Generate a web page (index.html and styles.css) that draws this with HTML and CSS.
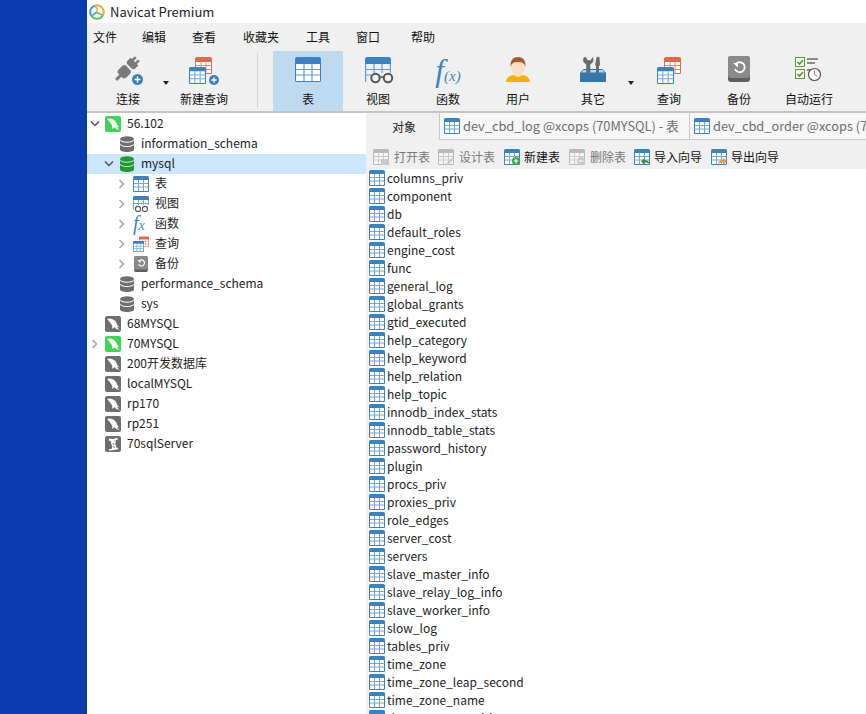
FILE: index.html
```html
<!DOCTYPE html>
<html lang="zh">
<head>
<meta charset="utf-8">
<title>Navicat Premium</title>
<link rel="stylesheet" href="styles.css">
</head>
<body>
<svg class="sprite" width="0" height="0">
  <defs>
    <symbol id="tbl" viewBox="0 0 16 16">
      <path d="M1.500 0h13A1.500 1.500 0 0 1 16 1.500V15a1 1 0 0 1-1 1H1a1 1 0 0 1-1-1V1.500A1.500 1.500 0 0 1 1.500 0z" fill="#3b83c0"/>
      <rect x="1" y="4" width="14" height="11" fill="#fff"/>
      <path d="M5.500 4v11M10.500 4v11M1 7.500h14M1 11h14" stroke="#6fa8d8" stroke-width="1" fill="none"/>
    </symbol>
    <symbol id="tblbig" viewBox="0 0 26 25">
      <path d="M2 0h22a2 2 0 0 1 2 2v21.500a1.500 1.500 0 0 1-1.500 1.500h-23A1.500 1.500 0 0 1 0 23.500V2a2 2 0 0 1 2-2z" fill="#3b83c0"/>
      <rect x="1" y="7" width="24" height="17" fill="#fff"/>
      <path d="M9 7v17M17 7v17M1 12.500h24M1 18h24" stroke="#5d9dd4" stroke-width="1.200" fill="none"/>
    </symbol>
    <symbol id="tblred" viewBox="0 0 17 17">
      <path d="M2 0h13a2 2 0 0 1 2 2v14a1 1 0 0 1-1 1H1a1 1 0 0 1-1-1V2a2 2 0 0 1 2-2z" fill="#dc6a4b"/>
      <rect x="1" y="5" width="15" height="11" fill="#fff"/>
      <path d="M6 5v11M11 5v11M1 8.500h15M1 12.500h15" stroke="#e08a72" stroke-width="1" fill="none"/>
    </symbol>
    <symbol id="dolphin" viewBox="0 0 16 16">
      <path d="M2 3C5 1.500 9 3 11 6c1 2 1.500 4 3 5l-2 .5 2.500 2.500c-2.500-.5-4-1.500-5-3-.5 1-1.500 1.500-2.500 1.500.5-1 .5-2 0-3C6 7.500 4 5 2 3z" fill="#fff"/>
    </symbol>
    <symbol id="db" viewBox="0 0 16 16">
      <ellipse cx="8" cy="3" rx="7" ry="2.800" fill="currentColor"/>
      <path d="M1 4.500c1.200 1.500 3.800 2.200 7 2.200s5.800-.7 7-2.200V7.200C15 8.800 12 10 8 10S1 8.800 1 7.200z" fill="currentColor"/>
      <path d="M1 8.800c1.200 1.500 3.800 2.200 7 2.200s5.800-.7 7-2.200v4.400C15 14.900 12 16 8 16s-7-1.100-7-2.800z" fill="currentColor"/>
    </symbol>
    <symbol id="chev-r" viewBox="0 0 8 10">
      <path d="M1.500 1l4 4-4 4" fill="none" stroke="#a6a6a6" stroke-width="1.500"/>
    </symbol>
    <symbol id="chev-d" viewBox="0 0 10 8">
      <path d="M1 1.500l4 4 4-4" fill="none" stroke="#555" stroke-width="1.500"/>
    </symbol>
    <symbol id="backup" viewBox="0 0 22 26">
      <rect width="22" height="26" rx="3" fill="#5f5f5f"/>
      <rect width="22" height="22" rx="3" fill="#8a8a8a"/>
      <path d="M7.500 8.500A5 5 0 1 1 7 13" fill="none" stroke="#fff" stroke-width="1.800"/>
      <path d="M5 7h5v4.500z" fill="#fff"/>
    </symbol>
    <symbol id="plus" viewBox="0 0 10 10">
      <circle cx="5" cy="5" r="5" fill="#3b7fb8"/>
      <path d="M5 2.300v5.400M2.300 5h5.400" stroke="#fff" stroke-width="1.300"/>
    </symbol>
  </defs>
</svg>

<div class="desktop"></div>
<main class="app">
  <header class="titlebar">
    <svg class="logo" viewBox="0 0 16 16" aria-hidden="true">
      <path d="M2.500 12A6.700 6.700 0 0 1 6.500 1.500" fill="none" stroke="#3f9fe0" stroke-width="2"/>
      <path d="M6.500 1.500A6.700 6.700 0 0 1 14 11" fill="none" stroke="#f4a93a" stroke-width="2"/>
      <path d="M14 11A6.700 6.700 0 0 1 2.500 12" fill="none" stroke="#5fc65c" stroke-width="2"/>
      <path d="M5.500 2.500C9 3.500 9 6.500 7 8.500" fill="none" stroke="#f4a93a" stroke-width="1.600"/>
      <path d="M7 8.500C5 10 4 11 3 12" fill="none" stroke="#3f9fe0" stroke-width="1.600"/>
      <path d="M7 8.500c2 .5 4.500 1.500 6.500 2.500" fill="none" stroke="#5fc65c" stroke-width="1.600"/>
    </svg>
    <span>Navicat Premium</span>
  </header>

  <nav class="menu">
    <span>文件</span><span>编辑</span><span>查看</span><span>收藏夹</span><span>工具</span><span>窗口</span><span>帮助</span>
  </nav>

  <section class="toolbar">
    <div class="tool">
      <svg class="ticon" viewBox="0 0 34 30" aria-hidden="true">
        <g transform="rotate(45 15 15)" fill="#7a7a7a">
          <rect x="11.500" y="-1" width="2.500" height="5"/>
          <rect x="16" y="-1" width="2.500" height="5"/>
          <path d="M9.500 3h11v4a3 3 0 0 1-3 3h-5a3 3 0 0 1-3-3z"/>
          <path d="M12.500 12h5a3 3 0 0 1 3 3v5a3 3 0 0 1-3 3h-5a3 3 0 0 1-3-3v-5a3 3 0 0 1 3-3z"/>
          <rect x="13.500" y="22" width="3" height="7"/>
        </g>
        <use href="#plus" x="21" y="19" width="11" height="11"/>
      </svg>
      <span>连接</span>
    </div>
    <i class="caret"></i>
    <div class="tool">
      <svg class="ticon" viewBox="0 0 34 30" aria-hidden="true">
        <use href="#tblred" x="8" y="2" width="17" height="17"/>
        <use href="#tbl" x="2" y="12" width="17" height="17"/>
        <use href="#plus" x="22" y="20" width="10" height="10"/>
      </svg>
      <span>新建查询</span>
    </div>
    <i class="sep"></i>
    <div class="tool active">
      <svg class="ticon" viewBox="0 0 34 30" aria-hidden="true"><use href="#tblbig" x="4" y="2" width="26" height="25"/></svg>
      <span>表</span>
    </div>
    <div class="tool">
      <svg class="ticon" viewBox="0 0 34 30" aria-hidden="true">
        <path d="M6 2h22a2 2 0 0 1 2 2v5H4V4a2 2 0 0 1 2-2z" fill="#3b83c0"/>
        <path d="M4.600 9v18M13 9v9M21 9v9M29.400 9v9M4 14.500h26M4 20h6" stroke="#5d9dd4" stroke-width="1.200" fill="none"/>
        <circle cx="14.500" cy="23" r="4.200" fill="#f0f0f0" stroke="#555" stroke-width="2"/>
        <circle cx="27" cy="23" r="4.200" fill="#f0f0f0" stroke="#555" stroke-width="2"/>
        <path d="M18.500 22h4.500" stroke="#555" stroke-width="1.600"/>
      </svg>
      <span>视图</span>
    </div>
    <div class="tool">
      <div class="fx"><b>f</b><em>(x)</em></div>
      <span>函数</span>
    </div>
    <div class="tool">
      <svg class="ticon" viewBox="0 0 34 30" aria-hidden="true">
        <path d="M5 27c0-4 3-6 7-7l5 2 5-2c4 1 7 3 7 7z" fill="#f4b400"/>
        <ellipse cx="17" cy="12" rx="7" ry="9" fill="#f8dfc8"/>
        <path d="M9.500 12C9 5 12.500 2 17 2s8 3 7.500 10C23.500 8 21 7 17 7s-6.500 1-7.500 5z" fill="#a8592a"/>
      </svg>
      <span>用户</span>
    </div>
    <div class="tool tool-gap">
      <svg class="ticon" viewBox="0 0 34 30" aria-hidden="true">
        <path d="M4.500 18l3-3.500h19l3 3.500z" fill="#bcd6ec" stroke="#3477ad"/>
        <path d="M8 2.500C6.500 5 7.500 8 10.500 9v11h3.500V9c3-1 4-4 2.500-6.500L15 5.500h-3.500L10 2.500z" fill="#6b6b6b" stroke="#6b6b6b" stroke-width=".6"/>
        <path d="M20.500 2.500c0-1 3-1 3 0l.5 8h-1v9h-3v-9h-1z" fill="#6b6b6b"/>
        <path d="M4 18h26v9H4z" fill="#3477ad"/>
      </svg>
      <span>其它</span>
    </div>
    <i class="caret"></i>
    <div class="tool">
      <svg class="ticon" viewBox="0 0 34 30" aria-hidden="true">
        <use href="#tblred" x="12" y="2" width="17" height="17"/>
        <use href="#tbl" x="5" y="12" width="17" height="17"/>
      </svg>
      <span>查询</span>
    </div>
    <div class="tool">
      <svg class="ticon" viewBox="0 0 34 30" aria-hidden="true"><use href="#backup" x="6" y="1" width="22" height="26"/></svg>
      <span>备份</span>
    </div>
    <div class="tool">
      <svg class="ticon" viewBox="0 0 34 30" aria-hidden="true">
        <rect x="3.500" y="2.500" width="9" height="9" fill="#fff" stroke="#5e9e3a"/>
        <path d="M5.500 7l2 2 3.500-4" stroke="#4f8f2f" stroke-width="1.600" fill="none"/>
        <rect x="3.500" y="14.500" width="9" height="9" fill="#fff" stroke="#5e9e3a"/>
        <path d="M5.500 19l2 2 3.500-4" stroke="#4f8f2f" stroke-width="1.600" fill="none"/>
        <path d="M15 4h11M15 8h8M15 15h4" stroke="#8a8a8a" stroke-width="1.800"/>
        <circle cx="22.500" cy="19.500" r="6" fill="#fff" stroke="#555" stroke-width="1.200"/>
        <path d="M22.500 15.500v4l3 2" stroke="#d9534f" fill="none"/>
      </svg>
      <span>自动运行</span>
    </div>
  </section>

  <div class="body">
    <aside class="tree">
      <div class="row l0"><svg class="chev"><use href="#chev-d"/></svg><span class="conn green"><svg><use href="#dolphin"/></svg></span><span class="lbl">56.102</span></div>
      <div class="row l1"><svg class="chev"></svg><svg class="dbi"><use href="#db"/></svg><span class="lbl">information_schema</span></div>
      <div class="row l1 sel"><svg class="chev"><use href="#chev-d"/></svg><svg class="dbi on"><use href="#db"/></svg><span class="lbl">mysql</span></div>
      <div class="row l2"><svg class="chev"><use href="#chev-r"/></svg><svg class="ic"><use href="#tbl"/></svg><span class="lbl">表</span></div>
      <div class="row l2"><svg class="chev"><use href="#chev-r"/></svg><svg class="ic" viewBox="0 0 16 16"><path d="M1.500 0h13A1.500 1.500 0 0 1 16 1.500V4H0V1.500A1.500 1.500 0 0 1 1.500 0z" fill="#3b83c0"/><path d="M.5 4v10M5.500 4v5M10.500 4v5M15.500 4v5M0 7.500h16" stroke="#6fa8d8" fill="none"/><circle cx="5" cy="13" r="2.600" fill="#fff" stroke="#555" stroke-width="1.100"/><circle cx="12" cy="13" r="2.600" fill="#fff" stroke="#555" stroke-width="1.100"/></svg><span class="lbl">视图</span></div>
      <div class="row l2"><svg class="chev"><use href="#chev-r"/></svg><span class="fxs"><b>f</b>x</span><span class="lbl">函数</span></div>
      <div class="row l2"><svg class="chev"><use href="#chev-r"/></svg><svg class="ic" viewBox="0 0 16 16"><use href="#tblred" x="6" y="0" width="10" height="11"/><use href="#tbl" x="0" y="5" width="11" height="11"/></svg><span class="lbl">查询</span></div>
      <div class="row l2"><svg class="chev"><use href="#chev-r"/></svg><svg class="ic"><use href="#backup"/></svg><span class="lbl">备份</span></div>
      <div class="row l1"><svg class="chev"></svg><svg class="dbi"><use href="#db"/></svg><span class="lbl">performance_schema</span></div>
      <div class="row l1"><svg class="chev"></svg><svg class="dbi"><use href="#db"/></svg><span class="lbl">sys</span></div>
      <div class="row l0"><svg class="chev"></svg><span class="conn"><svg><use href="#dolphin"/></svg></span><span class="lbl">68MYSQL</span></div>
      <div class="row l0"><svg class="chev"><use href="#chev-r"/></svg><span class="conn green"><svg><use href="#dolphin"/></svg></span><span class="lbl">70MYSQL</span></div>
      <div class="row l0"><svg class="chev"></svg><span class="conn"><svg><use href="#dolphin"/></svg></span><span class="lbl">200开发数据库</span></div>
      <div class="row l0"><svg class="chev"></svg><span class="conn"><svg><use href="#dolphin"/></svg></span><span class="lbl">localMYSQL</span></div>
      <div class="row l0"><svg class="chev"></svg><span class="conn"><svg><use href="#dolphin"/></svg></span><span class="lbl">rp170</span></div>
      <div class="row l0"><svg class="chev"></svg><span class="conn"><svg><use href="#dolphin"/></svg></span><span class="lbl">rp251</span></div>
      <div class="row l0"><svg class="chev"></svg><span class="conn"><svg viewBox="0 0 16 16"><path d="M4 3.500c3 1 6 .5 8.500-1" stroke="#fff" stroke-width="2" fill="none"/><path d="M6 5c-.5 3 2 5 1 8.500l5-1c-1.500-3-2-5-1-8z" fill="#fff"/><path d="M7.500 7.500l2 1M8 10.500l2 1" stroke="#6e6e6e"/><path d="M4 14l9-1.500" stroke="#fff" stroke-width="1.500"/></svg></span><span class="lbl">70sqlServer</span></div>
    </aside>

    <section class="pane">
      <div class="tabs">
        <div class="tab-obj">对象</div>
        <div class="tab"><svg class="ic"><use href="#tbl"/></svg><span>dev_cbd_log @xcops (70MYSQL) - 表</span></div>
        <div class="tab"><svg class="ic"><use href="#tbl"/></svg><span>dev_cbd_order @xcops (70MYSQL) - 表</span></div>
      </div>
      <div class="actions">
        <div class="act off"><svg class="ic" viewBox="0 0 16 16"><use href="#tbl"/><rect x="8" y="10" width="8" height="6" fill="#9a9a9a"/></svg><span>打开表</span></div>
        <div class="act off"><svg class="ic" viewBox="0 0 16 16"><use href="#tbl"/><path d="M8 15l7-7 1 2-6 6z" fill="#9a9a9a"/></svg><span>设计表</span></div>
        <div class="act nudge"><svg class="ic" viewBox="0 0 16 16"><use href="#tbl"/><circle cx="12" cy="12" r="4" fill="#3fa83f"/><path d="M12 9.700v4.600M9.700 12h4.600" stroke="#fff" stroke-width="1.200"/></svg><span>新建表</span></div>
        <div class="act off"><svg class="ic" viewBox="0 0 16 16"><use href="#tbl"/><circle cx="12" cy="12" r="4" fill="#d98c80"/><path d="M9.700 12h4.600" stroke="#fff" stroke-width="1.200"/></svg><span>删除表</span></div>
        <div class="act"><svg class="ic" viewBox="0 0 16 16"><use href="#tbl"/><path d="M15.500 15c-.5-3-2.500-4-5-4V9l-3.500 3.500L10.500 16v-2.500c2 0 3.500.3 5 1.500z" fill="#3f8f3f"/></svg><span>导入向导</span></div>
        <div class="act"><svg class="ic" viewBox="0 0 16 16"><use href="#tbl"/><path d="M7 15c.5-3 2.500-4 5-4V9l3.500 3.500L12 16v-2.500c-2 0-3.500.3-5 1.500z" fill="#e59a2e"/></svg><span>导出向导</span></div>
      </div>
      <ul class="list">
        <li><svg class="ic"><use href="#tbl"/></svg>columns_priv</li>
        <li><svg class="ic"><use href="#tbl"/></svg>component</li>
        <li><svg class="ic"><use href="#tbl"/></svg>db</li>
        <li><svg class="ic"><use href="#tbl"/></svg>default_roles</li>
        <li><svg class="ic"><use href="#tbl"/></svg>engine_cost</li>
        <li><svg class="ic"><use href="#tbl"/></svg>func</li>
        <li><svg class="ic"><use href="#tbl"/></svg>general_log</li>
        <li><svg class="ic"><use href="#tbl"/></svg>global_grants</li>
        <li><svg class="ic"><use href="#tbl"/></svg>gtid_executed</li>
        <li><svg class="ic"><use href="#tbl"/></svg>help_category</li>
        <li><svg class="ic"><use href="#tbl"/></svg>help_keyword</li>
        <li><svg class="ic"><use href="#tbl"/></svg>help_relation</li>
        <li><svg class="ic"><use href="#tbl"/></svg>help_topic</li>
        <li><svg class="ic"><use href="#tbl"/></svg>innodb_index_stats</li>
        <li><svg class="ic"><use href="#tbl"/></svg>innodb_table_stats</li>
        <li><svg class="ic"><use href="#tbl"/></svg>password_history</li>
        <li><svg class="ic"><use href="#tbl"/></svg>plugin</li>
        <li><svg class="ic"><use href="#tbl"/></svg>procs_priv</li>
        <li><svg class="ic"><use href="#tbl"/></svg>proxies_priv</li>
        <li><svg class="ic"><use href="#tbl"/></svg>role_edges</li>
        <li><svg class="ic"><use href="#tbl"/></svg>server_cost</li>
        <li><svg class="ic"><use href="#tbl"/></svg>servers</li>
        <li><svg class="ic"><use href="#tbl"/></svg>slave_master_info</li>
        <li><svg class="ic"><use href="#tbl"/></svg>slave_relay_log_info</li>
        <li><svg class="ic"><use href="#tbl"/></svg>slave_worker_info</li>
        <li><svg class="ic"><use href="#tbl"/></svg>slow_log</li>
        <li><svg class="ic"><use href="#tbl"/></svg>tables_priv</li>
        <li><svg class="ic"><use href="#tbl"/></svg>time_zone</li>
        <li><svg class="ic"><use href="#tbl"/></svg>time_zone_leap_second</li>
        <li><svg class="ic"><use href="#tbl"/></svg>time_zone_name</li>
        <li><svg class="ic"><use href="#tbl"/></svg>time_zone_transition</li>
      </ul>
    </section>
  </div>
</main>
</body>
</html>
```
FILE: styles.css
```css
* { box-sizing: border-box; }
html, body { margin: 0; height: 100%; overflow: hidden; }
body {
  display: flex;
  width: 866px;
  height: 714px;
  font: 12px/16px "Noto Sans CJK SC", "Noto Sans", sans-serif;
  color: #111;
  background: #fff;
}
.sprite { position: absolute; }
.desktop { width: 87px; flex: none; background: #0a3cae; }
.app { flex: 1; min-width: 0; display: flex; flex-direction: column; overflow: hidden; }

.titlebar { height: 23px; flex: none; display: flex; align-items: center; gap: 5px; padding-left: 2px; font-size: 13px; background: #fff; color: #222; }
.logo { width: 16px; height: 16px; flex: none; }

.menu { height: 27px; flex: none; display: grid; grid-template-columns: 49px 50px 51px 63px 50px 55px auto; align-items: center; padding-left: 6px; background: #f0f0f0; }

.toolbar { height: 63px; flex: none; display: flex; align-items: stretch; padding-left: 6px; background: #f0f0f0; border-bottom: 2px solid #c4c4c4; }
.tool { width: 70px; flex: none; display: flex; flex-direction: column; align-items: center; margin-top: 1px; padding-top: 4px; gap: 6px; }
.tool.active { background: #bedaf1; }
.tool-gap { margin-left: 5px; }
.ticon { width: 34px; height: 30px; flex: none; }
.caret { width: 6px; flex: none; position: relative; }
.caret::after { content: ""; position: absolute; left: 0; top: 31px; border: 3px solid transparent; border-top: 4px solid #222; border-bottom: 0; }
.sep { width: 1px; margin: 3px 15px 3px 18px; background: #d4d4d4; flex: none; }
.fx { height: 30px; flex: none; color: #3f83bb; font-family: "Liberation Serif", serif; font-style: italic; white-space: nowrap; line-height: 30px; }
.fx b { font-size: 32px; font-weight: 400; }
.fx em { font-size: 15px; }

.body { flex: 1; min-height: 0; display: flex; }
.tree { width: 279px; flex: none; padding-top: 1px; background: #fff; color: #222; overflow: hidden; }
.row { height: 20px; display: flex; align-items: center; white-space: nowrap; }
.row.sel { background: #cde6fb; }
.row.l0 { padding-left: 3px; }
.row.l1 { padding-left: 17px; }
.row.l2 { padding-left: 30px; }
.lbl { padding-bottom: 2px; }
.chev { width: 10px; height: 10px; flex: none; margin-right: 5px; }
.row.l2 .chev { margin-right: 6px; }
.conn { width: 16px; height: 16px; flex: none; margin-right: 6px; border-radius: 2px; background: #6e6e6e; }
.conn.green { background: #3fd456; }
.conn svg { display: block; width: 16px; height: 16px; }
.dbi { width: 16px; height: 16px; flex: none; margin-right: 6px; color: #6e6e6e; }
.dbi.on { color: #1f9a2c; }
.ic { width: 16px; height: 16px; flex: none; margin-right: 5px; }
.row.l2 .ic { margin-right: 6px; }
.fxs { width: 16px; margin-right: 6px; flex: none; color: #3f83bb; font: italic 14px/16px "Liberation Serif", serif; }
.fxs b { font-size: 20px; font-weight: 400; }

.pane { flex: 1; min-width: 0; display: flex; flex-direction: column; overflow: hidden; border-left: 2px solid #f0f0f0; }
.tabs { height: 30px; flex: none; display: flex; background: #f0f0f0; white-space: nowrap; overflow: hidden; }
.tab-obj { width: 71px; flex: none; padding-left: 24px; line-height: 28px; color: #222; }
.tab { display: flex; align-items: center; flex: none; width: 250px; height: 27px; padding-left: 4px; border-left: 1px solid #c8c8c8; border-bottom: 1px solid #c8c8c8; color: #6e6e6e; background: #f7f7f7; font-size: 12.800px; }
.tab .ic { margin-right: 3px; }
.tab:last-child { width: auto; }
.actions { height: 26px; flex: none; display: flex; align-items: center; padding: 2px 0 0 5px; gap: 8px; background: #f0f0f0; white-space: nowrap; }
.act { display: flex; align-items: center; padding-right: 1px; }
.act .ic { margin-right: 4px; }
.act.nudge { margin-left: 1px; }
.act.off { color: #777; padding-right: 0; }
.act.off .ic { margin-right: 5px; opacity: .45; filter: grayscale(1); }
.list { flex: 1; min-height: 0; margin: 0; padding: 0 0 0 1px; list-style: none; overflow: hidden; background: #fff; color: #222; }
.list li { height: 18px; display: flex; align-items: center; white-space: nowrap; }
.list .ic { margin-right: 2px; }
```
